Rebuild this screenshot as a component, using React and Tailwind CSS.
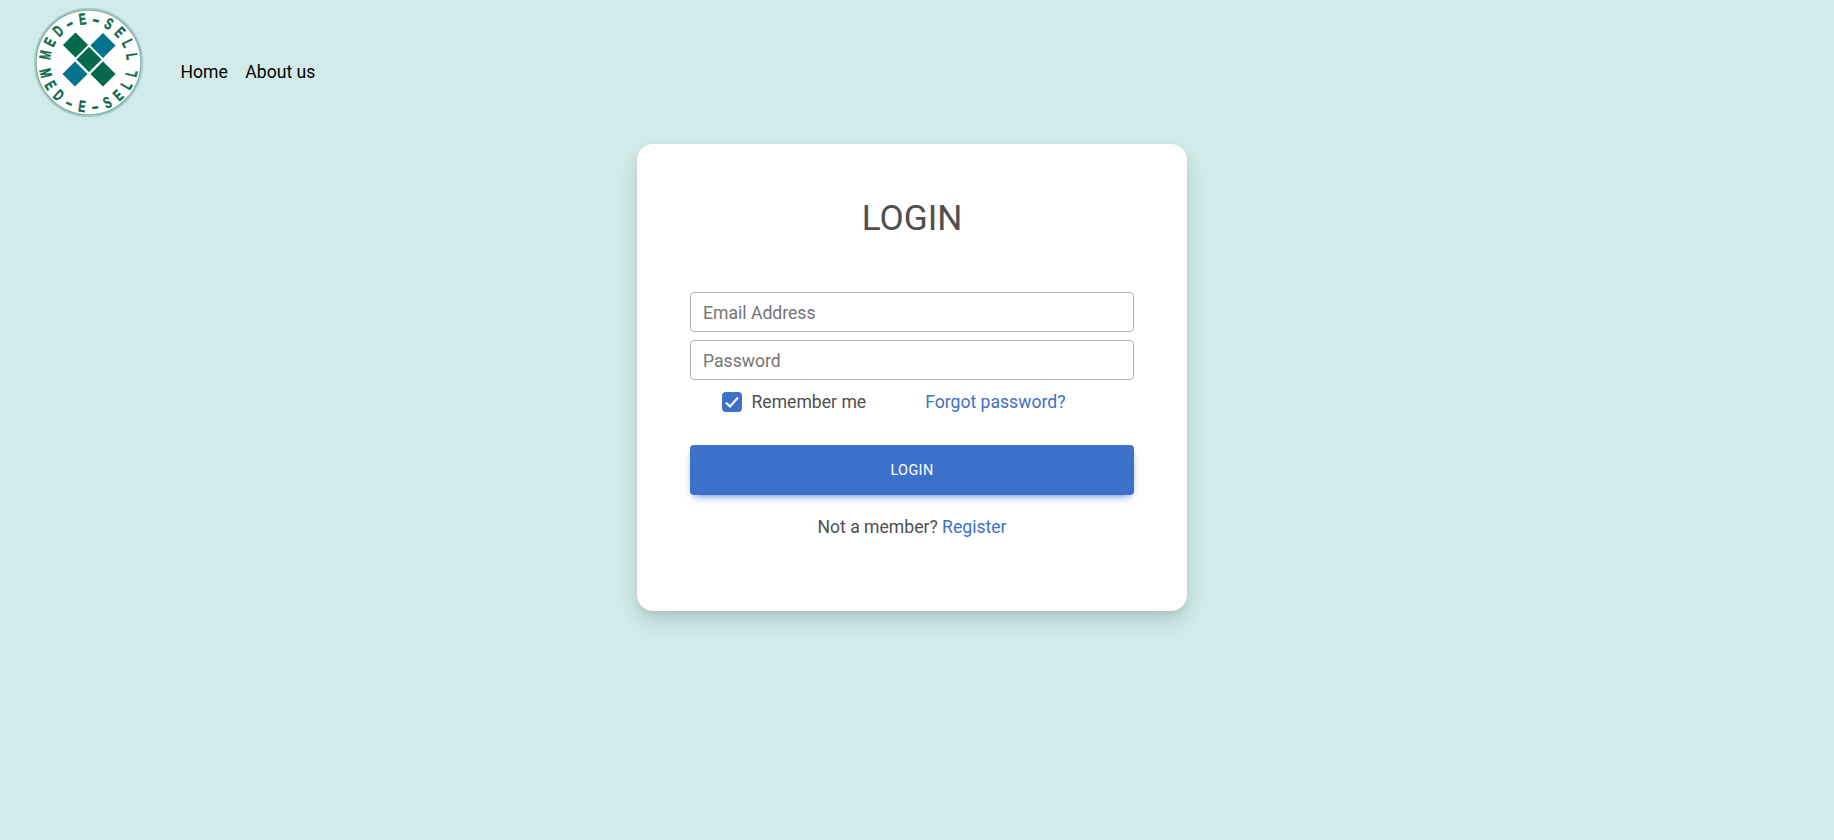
const TEXT = "MED-E-SELL".split("");
const CX = 54.5;
const CY = 55.5;
const R = 44;

function glyphTransform(c, x, y, a) {
  const sx = c === "-" ? 1.3 : 0.66;
  return `translate(${x} ${y}) rotate(${a}) scale(${sx} 1)`;
}

function Logo() {
  return (
    <svg width="112" height="112" viewBox="0 0 112 112" className="block shrink-0">
      <circle cx={CX} cy={CY} r="54" fill="#ffffff" stroke="#a8cdca" strokeWidth="1.5" />
      <circle cx={CX} cy={CY} r="52.5" fill="none" stroke="#7fb3ad" strokeWidth="1.5" />
      <g fill="#0f6b4c" stroke="#0f6b4c" strokeWidth="0.5" fontFamily="'Liberation Sans', sans-serif" fontWeight="700" fontSize="16" textAnchor="middle">
        {TEXT.map((c, i) => {
          const a = -80 + (i * 162) / 9;
          const rad = (a * Math.PI) / 180;
          const x = CX + R * Math.sin(rad);
          const y = CY - R * Math.cos(rad);
          return (
            <text key={"t" + i} transform={glyphTransform(c, x, y, a)} y="5.7">{c}</text>
          );
        })}
        {TEXT.map((c, i) => {
          const a = 76 - (i * 152) / 9;
          const rad = (a * Math.PI) / 180;
          const x = CX - R * Math.sin(rad);
          const y = CY + R * Math.cos(rad);
          return (
            <text key={"b" + i} transform={glyphTransform(c, x, y, a)} y="5.7">{c}</text>
          );
        })}
      </g>
      <g stroke="#ffffff" strokeWidth="1.2">
        <polygon points="41.5,24.5 55,38 41.5,51.5 28,38" fill="#046a4b" />
        <polygon points="69,25 82.5,38.5 69,52 55.5,38.5" fill="#04748c" />
        <polygon points="55,39 68.5,52.5 55,66 41.5,52.5" fill="#046a4b" />
        <polygon points="41,53.5 54.5,67 41,80.5 27.5,67" fill="#04748c" />
        <polygon points="69,53.5 82.5,67 69,80.5 55.5,67" fill="#046a4b" />
      </g>
    </svg>
  );
}

export default function App() {
  return (
    <div className="min-h-[840px] bg-[#d1ebeb] font-['Roboto',sans-serif] text-[#4f4f4f]">
      <header className="flex h-[122px] items-start pl-[34px] pt-[7px]">
        <Logo />
        <nav className="ml-[34.5px] mt-[52px] flex gap-[17.5px] text-[17.6px] leading-[26px] text-black">
          <a href="#">Home</a>
          <a href="#">About us</a>
        </nav>
      </header>
      <main className="flex justify-center pt-[22px] pr-[10px]">
        <div className="h-[467px] w-[550px] rounded-2xl bg-white px-[53px] pt-[48px] shadow-[0_10px_20px_rgba(0,0,0,0.14),0_3px_6px_rgba(0,0,0,0.05)]">
          <h1 className="text-center text-[35.2px] leading-[53px] font-normal">LOGIN</h1>
          <form className="mt-[47px]">
            <input
              type="email"
              placeholder="Email Address"
              className="block h-[40px] w-full rounded border border-[#b3b3b3] px-3 pt-[1px] text-[17.6px] outline-none placeholder:text-[#757575]"
            />
            <input
              type="password"
              placeholder="Password"
              className="mt-[8px] block h-[40px] w-full rounded border border-[#b3b3b3] px-3 pt-[1px] text-[17.6px] outline-none placeholder:text-[#757575]"
            />
            <div className="mt-[9px] flex h-[26px] items-center pl-[32px] text-[17.6px]">
              <span className="flex h-5 w-5 items-center justify-center rounded bg-[#3b71ca]">
                <svg width="16" height="16" viewBox="0 0 16 16" fill="none">
                  <path d="M2 8.5 L6 12.5 L14 3.5" stroke="#ffffff" strokeWidth="2" />
                </svg>
              </span>
              <label className="ml-[9.5px]">Remember me</label>
              <a href="#" className="ml-[59px] text-[#3b71ca]">Forgot password?</a>
            </div>
            <button
              type="button"
              className="mt-[30px] block h-[50px] w-full rounded bg-[#3b71ca] pt-[1px] text-center text-[14.4px] font-[450] tracking-[0.4px] text-white shadow-[0_4px_9px_-4px_#3b71ca]"
            >
              LOGIN
            </button>
            <p className="mt-[19px] text-center text-[17.6px] leading-[26px]">
              Not a member? <a href="#" className="text-[#3b71ca]">Register</a>
            </p>
          </form>
        </div>
      </main>
    </div>
  );
}
